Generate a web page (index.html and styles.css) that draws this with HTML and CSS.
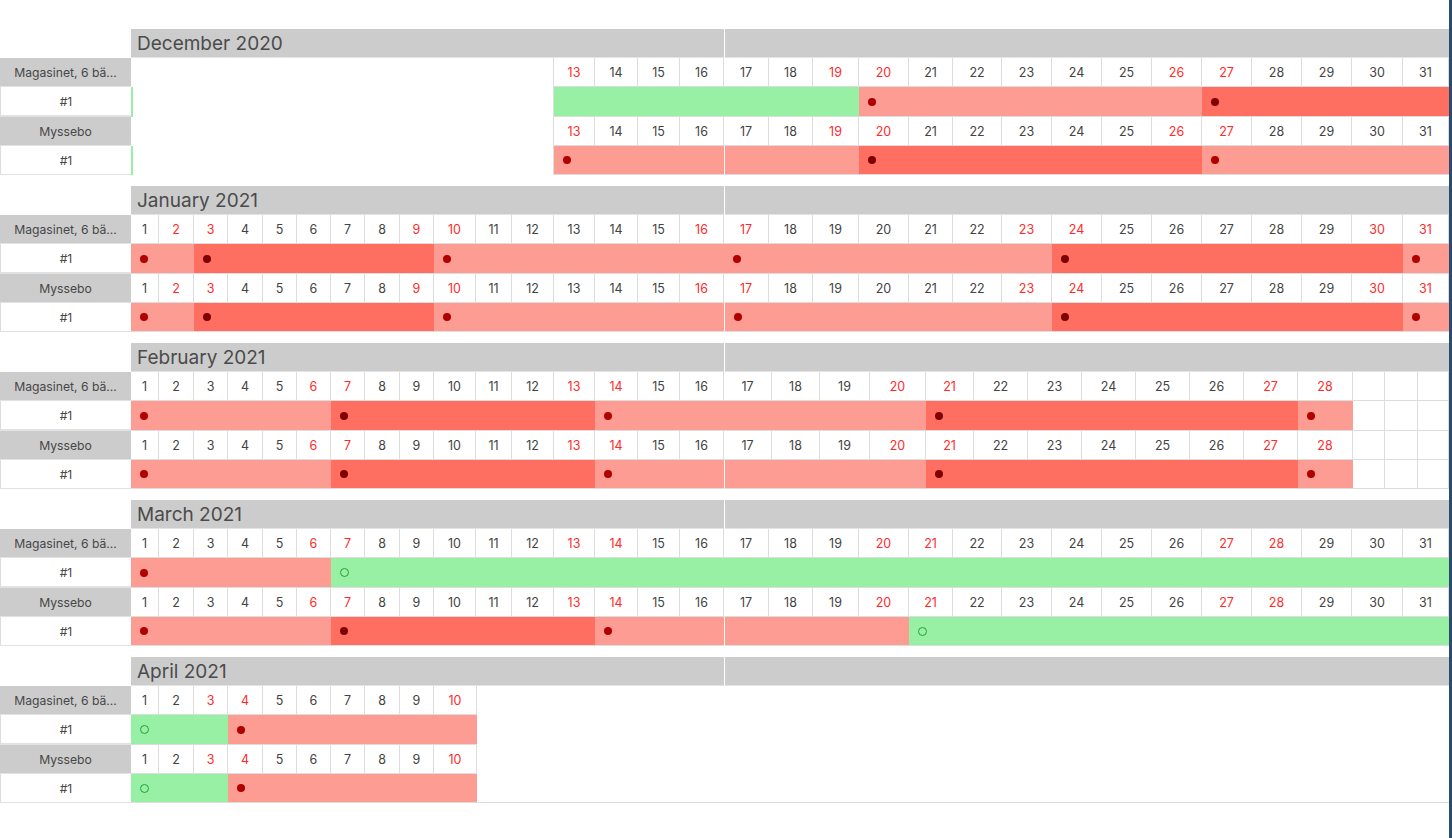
FILE: index.html
```html
<!DOCTYPE html>
<html lang="sv">
<head>
<meta charset="utf-8">
<title>Bokningskalender</title>
<link rel="stylesheet" href="styles.css">
</head>
<body>
<div class="edge"></div>
<div class="cal">

  <!-- December 2020 -->
  <section class="month m31">
    <div class="head"><div></div><div class="mh">December 2020</div><div class="mh mh2"></div></div>
    <div class="row">
      <div class="lbl room">Magasinet, 6 bä...</div>
      <div class="gap" style="grid-column: span 12"></div>
      <div class="d we">13</div><div class="d">14</div><div class="d">15</div><div class="d">16</div><div class="d">17</div><div class="d">18</div><div class="d we">19</div><div class="d we">20</div><div class="d">21</div><div class="d">22</div><div class="d">23</div><div class="d">24</div><div class="d">25</div><div class="d we">26</div><div class="d we">27</div><div class="d">28</div><div class="d">29</div><div class="d">30</div><div class="d">31</div>
    </div>
    <div class="row r2">
      <div class="lbl unit">#1</div>
      <div class="gap gl" style="grid-column: span 12"></div>
      <div class="seg free" style="grid-column: span 7"></div>
      <div class="seg light" style="grid-column: span 7"><span class="dot"></span></div>
      <div class="seg dark" style="grid-column: span 5"><span class="dot"></span></div>
    </div>
    <div class="row">
      <div class="lbl room">Myssebo</div>
      <div class="gap" style="grid-column: span 12"></div>
      <div class="d we">13</div><div class="d">14</div><div class="d">15</div><div class="d">16</div><div class="d">17</div><div class="d">18</div><div class="d we">19</div><div class="d we">20</div><div class="d">21</div><div class="d">22</div><div class="d">23</div><div class="d">24</div><div class="d">25</div><div class="d we">26</div><div class="d we">27</div><div class="d">28</div><div class="d">29</div><div class="d">30</div><div class="d">31</div>
    </div>
    <div class="row">
      <div class="lbl unit">#1</div>
      <div class="gap gl" style="grid-column: span 12"></div>
      <div class="seg light" style="grid-column: span 4"><span class="dot"></span></div>
      <div class="seg light split" style="grid-column: span 3"></div>
      <div class="seg dark" style="grid-column: span 7"><span class="dot"></span></div>
      <div class="seg light" style="grid-column: span 5"><span class="dot"></span></div>
    </div>
  </section>

  <!-- January 2021 -->
  <section class="month m31">
    <div class="head"><div></div><div class="mh">January 2021</div><div class="mh mh2"></div></div>
    <div class="row">
      <div class="lbl room">Magasinet, 6 bä...</div>
      <div class="d">1</div><div class="d we">2</div><div class="d we">3</div><div class="d">4</div><div class="d">5</div><div class="d">6</div><div class="d">7</div><div class="d">8</div><div class="d we">9</div><div class="d we">10</div><div class="d">11</div><div class="d">12</div><div class="d">13</div><div class="d">14</div><div class="d">15</div><div class="d we">16</div><div class="d we">17</div><div class="d">18</div><div class="d">19</div><div class="d">20</div><div class="d">21</div><div class="d">22</div><div class="d we">23</div><div class="d we">24</div><div class="d">25</div><div class="d">26</div><div class="d">27</div><div class="d">28</div><div class="d">29</div><div class="d we">30</div><div class="d we">31</div>
    </div>
    <div class="row r2">
      <div class="lbl unit">#1</div>
      <div class="seg light" style="grid-column: span 2"><span class="dot"></span></div>
      <div class="seg dark" style="grid-column: span 7"><span class="dot"></span></div>
      <div class="seg light" style="grid-column: span 7"><span class="dot"></span></div>
      <div class="seg light" style="grid-column: span 7"><span class="dot"></span></div>
      <div class="seg dark" style="grid-column: span 7"><span class="dot"></span></div>
      <div class="seg light" style="grid-column: span 1"><span class="dot"></span></div>
    </div>
    <div class="row">
      <div class="lbl room">Myssebo</div>
      <div class="d">1</div><div class="d we">2</div><div class="d we">3</div><div class="d">4</div><div class="d">5</div><div class="d">6</div><div class="d">7</div><div class="d">8</div><div class="d we">9</div><div class="d we">10</div><div class="d">11</div><div class="d">12</div><div class="d">13</div><div class="d">14</div><div class="d">15</div><div class="d we">16</div><div class="d we">17</div><div class="d">18</div><div class="d">19</div><div class="d">20</div><div class="d">21</div><div class="d">22</div><div class="d we">23</div><div class="d we">24</div><div class="d">25</div><div class="d">26</div><div class="d">27</div><div class="d">28</div><div class="d">29</div><div class="d we">30</div><div class="d we">31</div>
    </div>
    <div class="row">
      <div class="lbl unit">#1</div>
      <div class="seg light" style="grid-column: span 2"><span class="dot"></span></div>
      <div class="seg dark" style="grid-column: span 7"><span class="dot"></span></div>
      <div class="seg light" style="grid-column: span 7"><span class="dot"></span></div>
      <div class="seg light split" style="grid-column: span 7"><span class="dot"></span></div>
      <div class="seg dark" style="grid-column: span 7"><span class="dot"></span></div>
      <div class="seg light" style="grid-column: span 1"><span class="dot"></span></div>
    </div>
  </section>

  <!-- February 2021 -->
  <section class="month feb">
    <div class="head"><div></div><div class="mh">February 2021</div><div class="mh mh2"></div></div>
    <div class="row">
      <div class="lbl room">Magasinet, 6 bä...</div>
      <div class="d">1</div><div class="d">2</div><div class="d">3</div><div class="d">4</div><div class="d">5</div><div class="d we">6</div><div class="d we">7</div><div class="d">8</div><div class="d">9</div><div class="d">10</div><div class="d">11</div><div class="d">12</div><div class="d we">13</div><div class="d we">14</div><div class="d">15</div><div class="d">16</div><div class="d">17</div><div class="d">18</div><div class="d">19</div><div class="d we">20</div><div class="d we">21</div><div class="d">22</div><div class="d">23</div><div class="d">24</div><div class="d">25</div><div class="d">26</div><div class="d we">27</div><div class="d we">28</div><div class="d"></div><div class="d"></div><div class="d"></div>
    </div>
    <div class="row r2">
      <div class="lbl unit">#1</div>
      <div class="seg light" style="grid-column: span 6"><span class="dot"></span></div>
      <div class="seg dark" style="grid-column: span 7"><span class="dot"></span></div>
      <div class="seg light" style="grid-column: span 7"><span class="dot"></span></div>
      <div class="seg dark" style="grid-column: span 7"><span class="dot"></span></div>
      <div class="seg light" style="grid-column: span 1"><span class="dot"></span></div>
      <div class="d"></div><div class="d"></div><div class="d"></div>
    </div>
    <div class="row">
      <div class="lbl room">Myssebo</div>
      <div class="d">1</div><div class="d">2</div><div class="d">3</div><div class="d">4</div><div class="d">5</div><div class="d we">6</div><div class="d we">7</div><div class="d">8</div><div class="d">9</div><div class="d">10</div><div class="d">11</div><div class="d">12</div><div class="d we">13</div><div class="d we">14</div><div class="d">15</div><div class="d">16</div><div class="d">17</div><div class="d">18</div><div class="d">19</div><div class="d we">20</div><div class="d we">21</div><div class="d">22</div><div class="d">23</div><div class="d">24</div><div class="d">25</div><div class="d">26</div><div class="d we">27</div><div class="d we">28</div><div class="d"></div><div class="d"></div><div class="d"></div>
    </div>
    <div class="row">
      <div class="lbl unit">#1</div>
      <div class="seg light" style="grid-column: span 6"><span class="dot"></span></div>
      <div class="seg dark" style="grid-column: span 7"><span class="dot"></span></div>
      <div class="seg light" style="grid-column: span 3"><span class="dot"></span></div>
      <div class="seg light split" style="grid-column: span 4"></div>
      <div class="seg dark" style="grid-column: span 7"><span class="dot"></span></div>
      <div class="seg light" style="grid-column: span 1"><span class="dot"></span></div>
      <div class="d"></div><div class="d"></div><div class="d"></div>
    </div>
  </section>

  <!-- March 2021 -->
  <section class="month m31">
    <div class="head"><div></div><div class="mh">March 2021</div><div class="mh mh2"></div></div>
    <div class="row">
      <div class="lbl room">Magasinet, 6 bä...</div>
      <div class="d">1</div><div class="d">2</div><div class="d">3</div><div class="d">4</div><div class="d">5</div><div class="d we">6</div><div class="d we">7</div><div class="d">8</div><div class="d">9</div><div class="d">10</div><div class="d">11</div><div class="d">12</div><div class="d we">13</div><div class="d we">14</div><div class="d">15</div><div class="d">16</div><div class="d">17</div><div class="d">18</div><div class="d">19</div><div class="d we">20</div><div class="d we">21</div><div class="d">22</div><div class="d">23</div><div class="d">24</div><div class="d">25</div><div class="d">26</div><div class="d we">27</div><div class="d we">28</div><div class="d">29</div><div class="d">30</div><div class="d">31</div>
    </div>
    <div class="row r2">
      <div class="lbl unit">#1</div>
      <div class="seg light" style="grid-column: span 6"><span class="dot"></span></div>
      <div class="seg free" style="grid-column: span 25"><span class="ring"></span></div>
    </div>
    <div class="row">
      <div class="lbl room">Myssebo</div>
      <div class="d">1</div><div class="d">2</div><div class="d">3</div><div class="d">4</div><div class="d">5</div><div class="d we">6</div><div class="d we">7</div><div class="d">8</div><div class="d">9</div><div class="d">10</div><div class="d">11</div><div class="d">12</div><div class="d we">13</div><div class="d we">14</div><div class="d">15</div><div class="d">16</div><div class="d">17</div><div class="d">18</div><div class="d">19</div><div class="d we">20</div><div class="d we">21</div><div class="d">22</div><div class="d">23</div><div class="d">24</div><div class="d">25</div><div class="d">26</div><div class="d we">27</div><div class="d we">28</div><div class="d">29</div><div class="d">30</div><div class="d">31</div>
    </div>
    <div class="row">
      <div class="lbl unit">#1</div>
      <div class="seg light" style="grid-column: span 6"><span class="dot"></span></div>
      <div class="seg dark" style="grid-column: span 7"><span class="dot"></span></div>
      <div class="seg light" style="grid-column: span 3"><span class="dot"></span></div>
      <div class="seg light split" style="grid-column: span 4"></div>
      <div class="seg free" style="grid-column: span 11"><span class="ring"></span></div>
    </div>
  </section>

  <!-- April 2021 -->
  <section class="month apr">
    <div class="head"><div></div><div class="mh">April 2021</div><div class="mh mh2"></div></div>
    <div class="row">
      <div class="lbl room">Magasinet, 6 bä...</div>
      <div class="d">1</div><div class="d">2</div><div class="d we">3</div><div class="d we">4</div><div class="d">5</div><div class="d">6</div><div class="d">7</div><div class="d">8</div><div class="d">9</div><div class="d we">10</div>
    </div>
    <div class="row r2">
      <div class="lbl unit">#1</div>
      <div class="seg free" style="grid-column: span 3"><span class="ring"></span></div>
      <div class="seg light" style="grid-column: span 7"><span class="dot"></span></div>
    </div>
    <div class="row">
      <div class="lbl room">Myssebo</div>
      <div class="d">1</div><div class="d">2</div><div class="d we">3</div><div class="d we">4</div><div class="d">5</div><div class="d">6</div><div class="d">7</div><div class="d">8</div><div class="d">9</div><div class="d we">10</div>
    </div>
    <div class="row">
      <div class="lbl unit">#1</div>
      <div class="seg free" style="grid-column: span 3"><span class="ring"></span></div>
      <div class="seg light" style="grid-column: span 7"><span class="dot"></span></div>
      <div class="fill"></div>
    </div>
  </section>

</div>
</body>
</html>
```

FILE: styles.css
```css
* {
  box-sizing: border-box;
}

html, body {
  margin: 0;
  padding: 0;
  background: #ffffff;
}

body {
  font-family: Inter, "Noto Sans", "Liberation Sans", sans-serif;
  color: #444444;
  overflow: hidden;
}

.edge {
  position: fixed;
  top: 0;
  right: 0;
  width: 3px;
  height: 100%;
  background: #2c4a6d;
  z-index: 5;
}

.cal {
  width: 1449px;
  padding-top: 29px;
}

.month {
  margin-bottom: 11px;
}

.m31 {
  --cols: 131px 28px 35px 34px 35px 34px 34px 34px 35px 34px 42px 36px 42px 41px 43px 42px 44px
          45px 44px 46px 50px 44px 49px 50px 50px 50px 50px 50px 50px 50px 51px 1fr;
}

.feb {
  --cols: 131px 28px 35px 34px 35px 34px 34px 34px 35px 34px 42px 36px 42px 41px 43px 42px 44px
          48px 48px 50px 56px 48px 54px 54px 54px 54px 54px 54px 55px 32px 33px 1fr;
}

.apr {
  --cols: 131px 28px 35px 34px 35px 34px 34px 34px 35px 34px 43px 1fr;
}

.head {
  display: grid;
  grid-template-columns: 131px 593px 1fr;
  height: 29px;
}

.mh {
  background: #cccccc;
  border-bottom: 1px solid #e4e4e4;
  display: flex;
  align-items: center;
  padding-left: 6px;
  font-size: 19px;
  color: #4b4b4b;
}

.mh2 {
  border-left: 1px solid #ffffff;
}

.row {
  display: grid;
  grid-template-columns: var(--cols);
  height: 29px;
}

.row.r2 {
  height: 30px;
}

.lbl {
  display: flex;
  align-items: center;
  justify-content: center;
  font-size: 12.2px;
  color: #474747;
  border-bottom: 1px solid #e2e2e2;
  white-space: nowrap;
  overflow: hidden;
}

.room {
  background: #cccccc;
}

.unit {
  background: #ffffff;
  border-left: 1px solid #dddddd;
}

.r2 > * {
  border-bottom-width: 2px;
}

.d {
  display: flex;
  align-items: center;
  justify-content: center;
  font-size: 12.5px;
  color: #434343;
  background: #ffffff;
  border-right: 1px solid #dddddd;
  border-bottom: 1px solid #dddddd;
}

.d.we {
  color: #ff2b2b;
}

.gap {
  border-right: 1px solid #dddddd;
}

.row > .gap {
  border-bottom: 0;
}

.gl {
  border-left: 2px solid #98f0a4;
}

.seg {
  display: flex;
  align-items: center;
  padding-left: 9px;
  border-bottom: 1px solid #dddddd;
}

.light {
  background: #fd9c92;
}

.dark {
  background: #fe6f61;
}

.free {
  background: #97f0a4;
}

.split {
  border-left: 1px solid #ffffff;
}

.dot {
  display: block;
  width: 8px;
  height: 8px;
  border-radius: 50%;
  background: #b00000;
}

.dark .dot {
  background: #7e0000;
}

.ring {
  display: block;
  width: 9px;
  height: 9px;
  border-radius: 50%;
  border: 1.5px solid #26a03a;
}

.fill {
  border-bottom: 1px solid #dddddd;
}
```
